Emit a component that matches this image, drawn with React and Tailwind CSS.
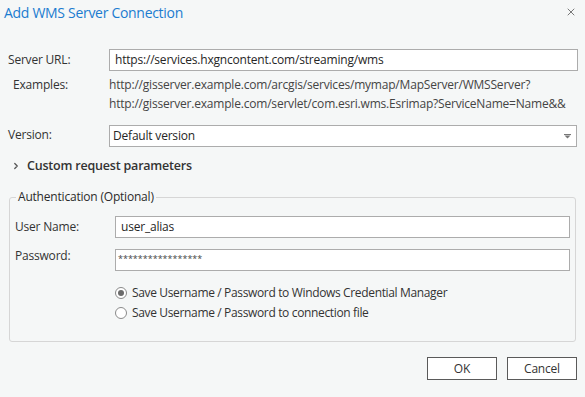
import React from 'react';
import { X, ChevronRight } from 'lucide-react';

const font = { fontFamily: '"Open Sans", "Noto Sans", sans-serif' };

function TextBox({ value, className = '' }) {
  return (
    <div
      className={`h-[22px] border border-[#acacac] bg-white px-[5px] flex items-center text-[12px] text-[#262626] ${className}`}
    >
      {value}
    </div>
  );
}

function Radio({ checked, label }) {
  return (
    <label className="flex items-center h-[20px] gap-[5px] text-[12px] text-[#333] tracking-[-0.35px]">
      <span className="w-[12px] h-[12px] rounded-full border border-[#8a8a8a] bg-white flex items-center justify-center">
        {checked && <span className="w-[6px] h-[6px] rounded-full bg-[#6b6b6b]" />}
      </span>
      {label}
    </label>
  );
}

export default function App() {
  return (
    <div
      className="w-[585px] h-[397px] bg-[#f5f7f7] flex flex-col text-[#333] overflow-hidden tracking-[-0.2px]"
      style={font}
    >
      {/* Title bar */}
      <div className="flex items-center justify-between h-[24px] pl-[4px] pr-[8px]">
        <span className="text-[14px] text-[#1b7cd0] tracking-[-0.3px]">Add WMS Server Connection</span>
        <X size={12} strokeWidth={1.8} className="text-[#6a6a6a]" />
      </div>

      {/* Server URL */}
      <div className="flex items-center mt-[25px] pl-[8px] pr-[7px]">
        <span className="w-[101px] text-[12px]">Server URL:</span>
        <TextBox value="https://services.hxgncontent.com/streaming/wms" className="flex-1" />
      </div>

      {/* Examples */}
      <div className="flex mt-[4px] pl-[13px] pr-[7px] text-[12px] leading-[19px]">
        <span className="w-[96px]">Examples:</span>
        <div className="flex flex-col text-[#444]">
          <span>http://gisserver.example.com/arcgis/services/mymap/MapServer/WMSServer?</span>
          <span>http://gisserver.example.com/servlet/com.esri.wms.Esrimap?ServiceName=Name&amp;&amp;</span>
        </div>
      </div>

      {/* Version */}
      <div className="flex items-start mt-[12px] pl-[8px] pr-[8px]">
        <span className="w-[101px] text-[12px] leading-[20px]">Version:</span>
        <div className="flex-1 h-[22px] border border-[#acacac] bg-white pl-[3px] pr-[5px] flex items-center justify-between text-[12px] text-[#262626]">
          <span>Default version</span>
          <svg width="7" height="5" viewBox="0 0 7 5">
            <rect x="0" y="0" width="7" height="1" fill="#777" />
            <path d="M0.5 1.5 H6.5 L3.5 4.5 Z" fill="#777" />
          </svg>
        </div>
      </div>

      {/* Custom request parameters */}
      <div className="flex items-center mt-[9px] pl-[11px] h-[20px] gap-[6px]">
        <ChevronRight size={10} strokeWidth={3} className="text-[#555]" />
        <span className="text-[12.5px] font-semibold text-[#333]">Custom request parameters</span>
      </div>

      {/* Authentication group */}
      <fieldset className="mx-[9px] mt-[13px] h-[153px] border border-[#d6d6d6] rounded-[3px] px-[5px] pt-0 min-w-0">
        <legend className="ml-[1px] px-[2px] text-[12px] text-[#2b2b2b] leading-[16px]">
          Authentication (Optional)
        </legend>
        <div className="flex items-center mt-[11px]">
          <span className="w-[100px] text-[12px]">User Name:</span>
          <TextBox value="user_alias" className="flex-1" />
        </div>
        <div className="flex items-start mt-[11px]">
          <span className="w-[100px] text-[12px] leading-[14px]">Password:</span>
          <div className="flex-1 h-[22px] border border-[#acacac] bg-white px-[2px] flex items-start pt-[2px] text-[9px] tracking-[0px] text-[#444]">
            *****************
          </div>
        </div>
        <div className="flex flex-col ml-[100px] mt-[12px]">
          <Radio checked label="Save Username / Password to Windows Credential Manager" />
          <Radio label="Save Username / Password to connection file" />
        </div>
      </fieldset>

      {/* Buttons */}
      <div className="flex justify-end gap-[10px] mt-[15px] pr-[8px]">
        <button className="w-[70px] h-[23px] border border-[#5a5a5a] bg-white text-[12px] text-[#333]">
          OK
        </button>
        <button className="w-[70px] h-[23px] border border-[#5a5a5a] bg-white text-[12px] text-[#333]">
          Cancel
        </button>
      </div>
    </div>
  );
}
